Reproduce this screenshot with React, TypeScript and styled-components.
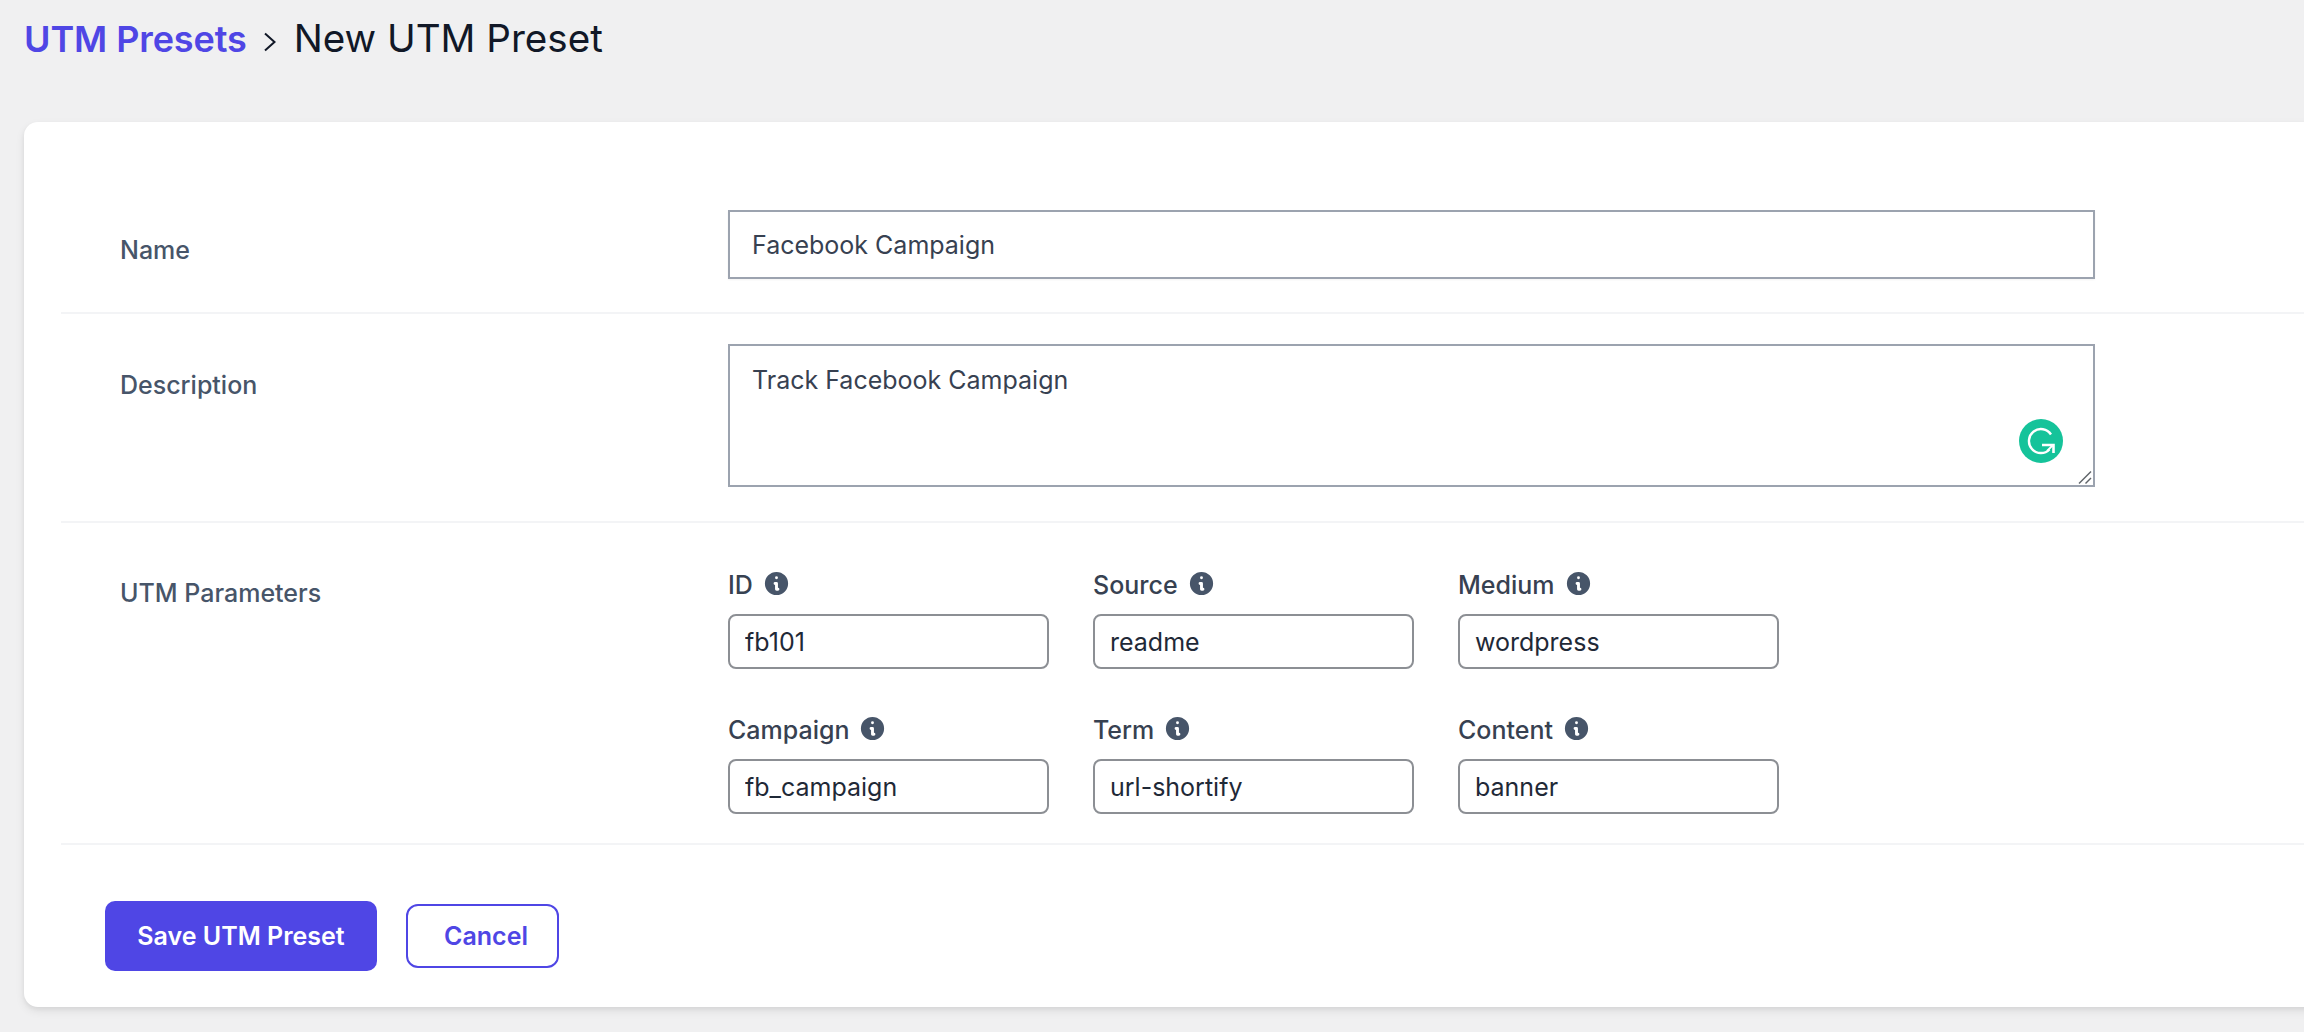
import React from 'react'
import styled, { createGlobalStyle } from 'styled-components'
import { HiInformationCircle } from 'react-icons/hi'

const GlobalStyle = createGlobalStyle`
    html, body {
        margin: 0;
        padding: 0;
        height: 100%;
        overflow: hidden;
        background: #f0f0f1;
        font-family: Inter, "Noto Sans", sans-serif;
    }
`

const Page = styled.div`
    width: 2304px;
    height: 1032px;
    overflow: hidden;
    padding: 0 0 0 24px;
    box-sizing: border-box;
`

const Breadcrumb = styled.header`
    height: 122px;
    box-sizing: border-box;
    padding-top: 14px;
    display: flex;
    align-items: baseline;
`

const BreadcrumbLink = styled.a`
    font-size: 36px;
    line-height: 48px;
    font-weight: 600;
    letter-spacing: -0.1px;
    color: #4f46e5;
`

const Chevron = styled.svg`
    width: 14px;
    height: 20px;
    margin: 18px 17px 0 16px;
    align-self: flex-start;
`

const BreadcrumbTitle = styled.h1`
    margin: 0;
    font-size: 38.6px;
    line-height: 48px;
    font-weight: 400;
    color: #111827;
`

const Card = styled.section`
    width: 2400px;
    height: 885px;
    box-sizing: border-box;
    padding: 55px 0 0 37px;
    background: #fff;
    border-radius: 14px;
    box-shadow: 0 4px 10px rgba(0, 0, 0, 0.08), 0 2px 4px rgba(0, 0, 0, 0.05);
`

const Row = styled.div<{ $pad: string }>`
    display: grid;
    grid-template-columns: 667px 1fr;
    padding: ${p => p.$pad};
    border-bottom: 2px solid #f3f4f6;
`

const RowLabel = styled.label<{ $top: number }>`
    padding: ${p => p.$top}px 0 0 59px;
    font-size: 25px;
    line-height: 32px;
    font-weight: 500;
    color: #475569;
`

const TextInput = styled.input`
    display: block;
    width: 1367px;
    height: 69px;
    box-sizing: border-box;
    padding: 0 22px;
    margin: 0;
    border: 2px solid #9ca3af;
    border-radius: 0;
    outline: none;
    background: #fff;
    font: 400 25px Inter, sans-serif;
    color: #374151;
    box-shadow: 0 1px 2px rgba(0, 0, 0, 0.05);
`

const AreaWrap = styled.div`
    position: relative;
    width: 1367px;
    height: 143px;
`

const TextArea = styled.textarea`
    display: block;
    width: 100%;
    height: 100%;
    box-sizing: border-box;
    padding: 18px 22px;
    margin: 0;
    border: 2px solid #9ca3af;
    border-radius: 0;
    outline: none;
    background: #fff;
    font: 400 25px/32px Inter, sans-serif;
    color: #374151;
    resize: none;
`

const GrammarlyBadge = styled.svg`
    position: absolute;
    right: 32px;
    bottom: 24px;
    width: 44px;
    height: 44px;
`

const ResizeHandle = styled.svg`
    position: absolute;
    right: 3px;
    bottom: 3px;
    width: 14px;
    height: 13px;
`

const ParamGrid = styled.div`
    display: grid;
    grid-template-columns: repeat(3, 321px);
    column-gap: 44px;
    row-gap: 43px;
`

const Param = styled.div`
    display: flex;
    flex-direction: column;
`

const ParamLabel = styled.label`
    display: flex;
    align-items: center;
    gap: 9px;
    height: 36px;
    margin-bottom: 11px;
    font-size: 25px;
    font-weight: 500;
    color: #374151;

    svg {
        color: #475569;
        margin-top: -3px;
    }
`

const ParamInput = styled.input`
    display: block;
    width: 321px;
    height: 55px;
    box-sizing: border-box;
    padding: 0 15px;
    margin: 0;
    border: 2px solid #8c8f94;
    border-radius: 8px;
    outline: none;
    background: #fff;
    font: 400 25px Inter, sans-serif;
    color: #1f2937;
`

const Actions = styled.div`
    display: flex;
    align-items: center;
    gap: 29px;
    padding: 56px 0 0 44px;
`

const SaveButton = styled.button`
    width: 272px;
    height: 70px;
    border: 0;
    border-radius: 10px;
    background: #4f46e5;
    color: #fff;
    font: 600 25px Inter, sans-serif;
`

const CancelButton = styled.button`
    width: 153px;
    height: 64px;
    box-sizing: border-box;
    padding: 0 0 0 7px;
    border: 2px solid #4f46e5;
    border-radius: 12px;
    background: #fff;
    color: #4f46e5;
    font: 600 25px Inter, sans-serif;
`

const params = [
    { label: 'ID', value: 'fb101' },
    { label: 'Source', value: 'readme' },
    { label: 'Medium', value: 'wordpress' },
    { label: 'Campaign', value: 'fb_campaign' },
    { label: 'Term', value: 'url-shortify' },
    { label: 'Content', value: 'banner' },
]

const App = () => {
    return (
        <Page>
            <GlobalStyle />
            <Breadcrumb>
                <BreadcrumbLink>UTM Presets</BreadcrumbLink>
                <Chevron viewBox="0 0 14 20" fill="none" stroke="#111827" strokeWidth="2">
                    <path d="M2 1.5 L11.5 10 L2 18.5" />
                </Chevron>
                <BreadcrumbTitle>New UTM Preset</BreadcrumbTitle>
            </Breadcrumb>
            <Card>
                <Row $pad="33px 0 33px 0">
                    <RowLabel $top={24}>Name</RowLabel>
                    <TextInput readOnly value="Facebook Campaign" />
                </Row>
                <Row $pad="30px 0 34px 0">
                    <RowLabel $top={25}>Description</RowLabel>
                    <AreaWrap>
                        <TextArea readOnly value="Track Facebook Campaign" />
                        <GrammarlyBadge viewBox="0 0 44 44">
                            <circle cx="22" cy="22" r="22" fill="#15c39a" />
                            <path
                                d="M32 15.5 A12 12 0 1 0 30.5 30.5"
                                fill="none"
                                stroke="#fff"
                                strokeWidth="2.4"
                            />
                            <path d="M23 26 H34.5 V34" fill="none" stroke="#fff" strokeWidth="2.6" />
                            <path d="M28 32 L34 26" fill="none" stroke="#fff" strokeWidth="1.8" />
                        </GrammarlyBadge>
                        <ResizeHandle viewBox="0 0 14 13" fill="none" stroke="#5f6368" strokeWidth="1.4">
                            <path d="M1 12.5 L13 0.5" />
                            <path d="M7.5 12.5 L13 7" />
                        </ResizeHandle>
                    </AreaWrap>
                </Row>
                <Row $pad="44px 0 29px 0">
                    <RowLabel $top={10}>UTM Parameters</RowLabel>
                    <ParamGrid>
                        {params.map(param => (
                            <Param key={param.label}>
                                <ParamLabel>
                                    {param.label}
                                    <HiInformationCircle size={29} />
                                </ParamLabel>
                                <ParamInput readOnly value={param.value} />
                            </Param>
                        ))}
                    </ParamGrid>
                </Row>
                <Actions>
                    <SaveButton>Save UTM Preset</SaveButton>
                    <CancelButton>Cancel</CancelButton>
                </Actions>
            </Card>
        </Page>
    )
}

export default App
